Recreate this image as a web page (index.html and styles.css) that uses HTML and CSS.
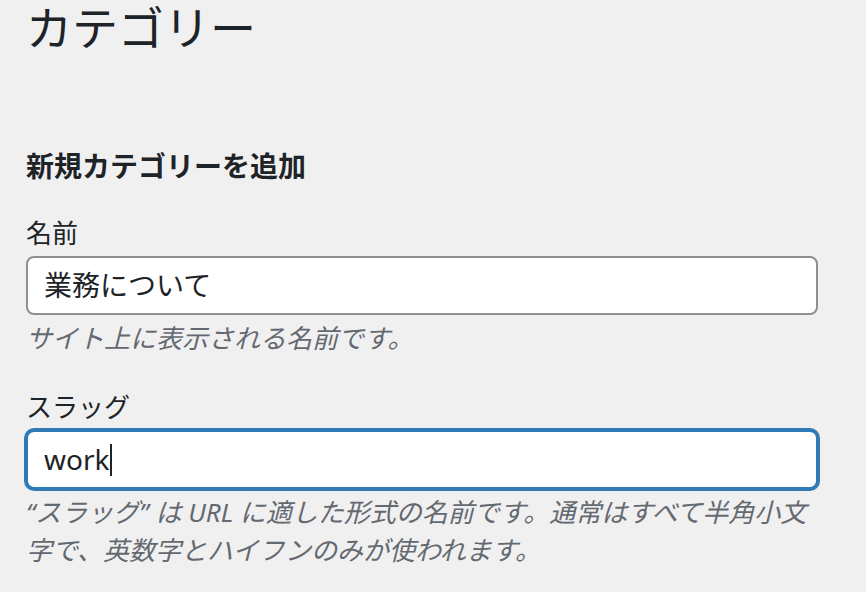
FILE: index.html
```html
<!DOCTYPE html>
<html lang="ja">
<head>
<meta charset="utf-8">
<link rel="stylesheet" href="styles.css">
</head>
<body>
<div class="wrap">
  <h1 class="page-title">カテゴリー</h1>
  <form class="form">
    <h2 class="form-title">新規カテゴリーを追加</h2>
    <div class="field">
      <label class="label">名前</label>
      <div class="input">業務について</div>
      <p class="desc">サイト上に表示される名前です。</p>
    </div>
    <div class="field field-slug">
      <label class="label">スラッグ</label>
      <div class="input input-focus">work<span class="caret"></span></div>
      <p class="desc">“スラッグ” は URL に適した形式の名前です。通常はすべて半角小文字で、英数字とハイフンのみが使われます。</p>
    </div>
  </form>
</div>
</body>
</html>
```

FILE: styles.css
```css
html, body {
  margin: 0;
  padding: 0;
  background: #f0f0f1;
}
body {
  font-family: "Noto Sans", "Noto Sans CJK JP", sans-serif;
  color: #1d2327;
}
.wrap {
  padding-left: 26px;
  width: 796px;
}
.page-title {
  margin: 0;
  font-size: 46px;
  font-weight: 400;
  line-height: 55px;
  color: #1d2327;
}
.form {
  margin-top: 92px;
}
.form-title {
  margin: 0;
  font-size: 28px;
  font-weight: 700;
  line-height: 39px;
}
.field {
  margin-top: 29px;
}
.field-slug {
  margin-top: 32px;
}
.label {
  display: block;
  font-size: 26px;
  line-height: 36px;
}
.input {
  margin-top: 5px;
  box-sizing: border-box;
  width: 792px;
  height: 59px;
  border: 2px solid #8c8f94;
  border-radius: 8px;
  background: #fff;
  padding: 0 16px;
  font-size: 28px;
  line-height: 55px;
  color: #1d2327;
  display: flex;
  align-items: center;
}
.input-focus {
  border-color: #307bb6;
  box-shadow: 0 0 0 2px #307bb6;
}
.caret {
  display: inline-block;
  width: 2px;
  height: 32px;
  background: #1d2327;
  margin-left: 1px;
}
.desc {
  margin: 4px 0 0;
  font-size: 26px;
  line-height: 38px;
  font-style: italic;
  color: #646970;
}
```
